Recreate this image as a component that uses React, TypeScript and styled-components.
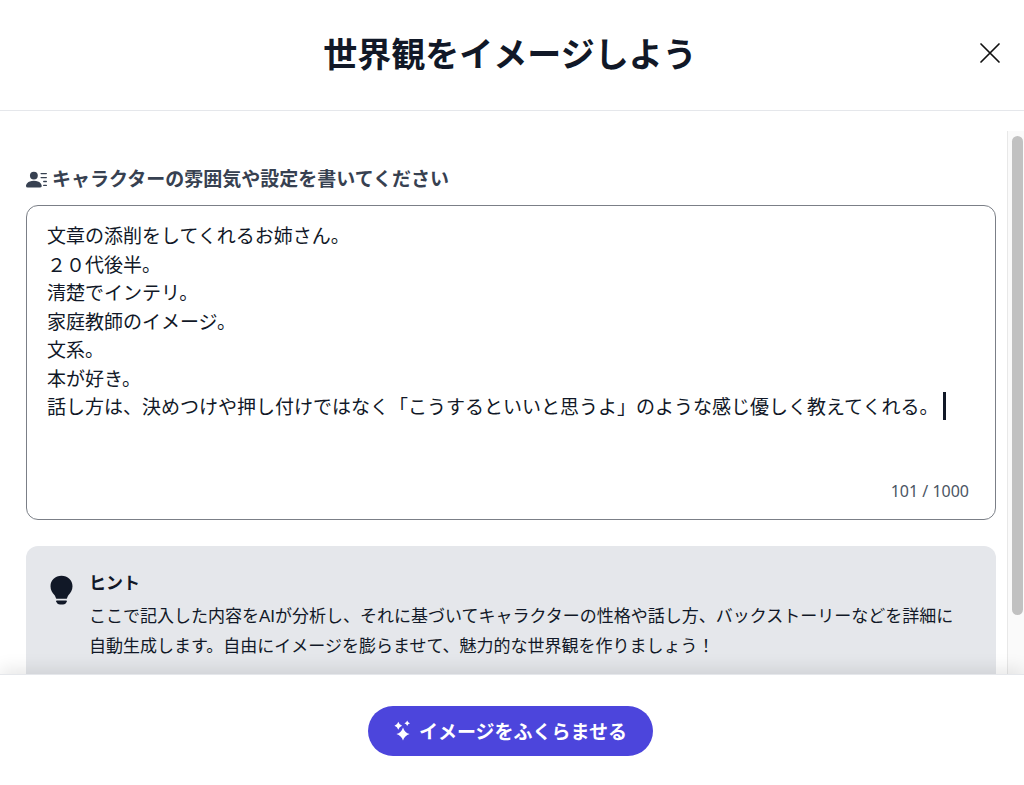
import React, { useState } from "react";
import styled, { createGlobalStyle } from "styled-components";
import { BsPersonLinesFill } from "react-icons/bs";

const GlobalStyle = createGlobalStyle`
  *, *::before, *::after { box-sizing: border-box; }
  body {
    margin: 0;
    background: #ffffff;
    color: #111827;
    font-family: "Noto Sans", "Noto Sans CJK JP", sans-serif;
  }
`;

const Dialog = styled.div`
  display: flex;
  flex-direction: column;
  height: 100vh;
  background: #ffffff;
`;

const Header = styled.header`
  display: grid;
  grid-template-columns: 64px 1fr 68px;
  align-items: center;
  flex: none;
  height: 111px;
  padding-bottom: 5px;
  border-bottom: 1px solid #e5e7eb;
`;

const Title = styled.h1`
  grid-column: 2;
  margin: 0;
  font-family: "Noto Sans CJK JP", sans-serif;
  font-size: 34px;
  line-height: 48px;
  font-weight: 700;
  text-align: center;
`;

const CloseButton = styled.button`
  display: flex;
  justify-content: center;
  padding: 0;
  border: 0;
  background: none;
  color: #111111;
  cursor: pointer;
`;

const Body = styled.main`
  display: flex;
  flex: 1;
  min-height: 0;
  overflow: hidden;
  padding-top: 20px;
`;

const Content = styled.div`
  flex: 1;
  min-width: 0;
  padding: 34px 11px 0 26px;
`;

const Track = styled.div`
  flex: none;
  width: 17px;
  padding: 5px 1px 0 4px;
  border-left: 1px solid #e8e8e8;
  background: #fafafa;
`;

const Thumb = styled.div`
  height: 89%;
  border-radius: 6px;
  background: #c1c1c1;
`;

const Label = styled.label`
  display: flex;
  align-items: center;
  gap: 5px;
  margin-bottom: 12px;
  color: #374151;
  font-size: 19px;
  line-height: 28px;
  font-weight: 700;
`;

const Editor = styled.div`
  position: relative;
  display: flex;
  flex-direction: column;
  height: 315px;
  padding: 15px 20px 16px;
  border: 1px solid #7b7f87;
  border-radius: 12px;
  background: #ffffff;
`;

const TextArea = styled.textarea`
  flex: 1;
  width: 100%;
  padding: 0;
  border: 0;
  outline: 0;
  resize: none;
  overflow: hidden;
  background: transparent;
  color: #111827;
  caret-color: transparent;
  font-family: "Noto Sans CJK JP", sans-serif;
  font-size: 19px;
  line-height: 1.5;
`;

const Caret = styled.span`
  position: absolute;
  top: 186px;
  left: 916px;
  width: 3px;
  height: 28px;
  background: #111827;
`;

const Counter = styled.div`
  padding-right: 6px;
  color: #4b5563;
  font-size: 16px;
  line-height: 24px;
  text-align: right;
`;

const Hint = styled.section`
  display: flex;
  gap: 12px;
  margin-top: 26px;
  padding: 22px 26px 24px 21px;
  border-radius: 12px;
  background: #e5e7eb;
`;

const HintIcon = styled.div`
  flex: none;
  padding-top: 7px;
  line-height: 0;
`;

const HintTitle = styled.h2`
  margin: 0 0 4px;
  font-size: 17px;
  line-height: 30px;
  font-weight: 700;
`;

const HintText = styled.p`
  margin: 0;
  font-family: "Liberation Sans", "Noto Sans CJK JP", sans-serif;
  font-size: 17px;
  line-height: 30px;
`;

const Footer = styled.footer`
  position: relative;
  display: flex;
  align-items: center;
  justify-content: center;
  flex: none;
  height: 111px;
  padding: 2px 3px 0 0;
  border-top: 1px solid #e5e7eb;
  background: #ffffff;
  box-shadow: 0 -6px 16px rgba(0, 0, 0, 0.09);
`;

const SubmitButton = styled.button`
  display: flex;
  align-items: center;
  gap: 6px;
  height: 50px;
  padding: 0 26px;
  border: 0;
  border-radius: 25px;
  background: #4c45dc;
  color: #ffffff;
  font-family: "Noto Sans CJK JP", sans-serif;
  font-size: 19px;
  line-height: 28px;
  font-weight: 700;
  cursor: pointer;
`;

const initialText = [
  "文章の添削をしてくれるお姉さん。",
  "２０代後半。",
  "清楚でインテリ。",
  "家庭教師のイメージ。",
  "文系。",
  "本が好き。",
  "話し方は、決めつけや押し付けではなく「こうするといいと思うよ」のような感じ優しく教えてくれる。",
].join("\n");

function CloseIcon() {
  return (
    <svg width="22" height="22" viewBox="0 0 22 22" fill="none" stroke="currentColor" strokeWidth="1.7" strokeLinecap="round" aria-hidden="true">
      <path d="M2 2L20 20M20 2L2 20" />
    </svg>
  );
}

function BulbIcon() {
  return (
    <svg width="30" height="30" viewBox="0 0 30 30" fill="currentColor" aria-hidden="true">
      <path d="M14.5 .7C8.3 .7 3.5 5.3 3.5 11.2C3.5 15 5.4 17.6 7.4 20C8.3 21.2 8.6 22.2 9 23.2Q9.2 23.8 9.8 23.8H19.2Q19.8 23.8 20 23.2C20.4 22.2 20.7 21.2 21.6 20C23.6 17.6 25.5 15 25.5 11.2C25.5 5.3 20.7 .7 14.5 .7Z" />
      <path d="M9.8 25.4H19.2Q20 25.4 19.8 26.2Q18.8 29.4 16 29.4H13Q10.2 29.4 9.2 26.2Q9 25.4 9.8 25.4Z" />
    </svg>
  );
}

function SparklesIcon() {
  return (
    <svg width="19" height="22" viewBox="0 0 19 22" fill="currentColor" aria-hidden="true">
      <path d="M9 7.4Q10.5 12.5 15.6 14Q10.5 15.5 9 20.6Q7.500 15.5 2.4 14Q7.500 12.5 9 7.4Z" />
      <path d="M4.3 1.700Q5.2 4.8 8.1 5.7Q5.2 6.6 4.3 9.7Q3.4 6.6 .5 5.7Q3.4 4.8 4.3 1.7Z" />
      <path d="M13.2 .4Q13.8 2.6 16 3.2Q13.8 3.8 13.2 6Q12.6 3.8 10.4 3.2Q12.6 2.6 13.2 .4Z" />
    </svg>
  );
}

export default function App() {
  const [text, setText] = useState(initialText);
  return (
    <>
      <GlobalStyle />
      <Dialog role="dialog" aria-labelledby="dialog-title">
        <Header>
          <Title id="dialog-title">世界観をイメージしよう</Title>
          <CloseButton type="button" aria-label="閉じる">
            <CloseIcon />
          </CloseButton>
        </Header>
        <Body>
          <Content>
            <Label htmlFor="character">
              <BsPersonLinesFill size={21} aria-hidden="true" />
              キャラクターの雰囲気や設定を書いてください
            </Label>
            <Editor>
              <TextArea
                id="character"
                maxLength={1000}
                spellCheck={false}
                value={text}
                onChange={(event) => setText(event.target.value)}
              />
              <Caret aria-hidden="true" />
              <Counter>101 / 1000</Counter>
            </Editor>
            <Hint>
              <HintIcon>
                <BulbIcon />
              </HintIcon>
              <div>
                <HintTitle>ヒント</HintTitle>
                <HintText>
                  ここで記入した内容をAIが分析し、それに基づいてキャラクターの性格や話し方、バックストーリーなどを詳細に自動生成します。自由にイメージを膨らませて、魅力的な世界観を作りましょう！
                </HintText>
              </div>
            </Hint>
          </Content>
          <Track aria-hidden="true">
            <Thumb />
          </Track>
        </Body>
        <Footer>
          <SubmitButton type="button">
            <SparklesIcon />
            イメージをふくらませる
          </SubmitButton>
        </Footer>
      </Dialog>
    </>
  );
}
